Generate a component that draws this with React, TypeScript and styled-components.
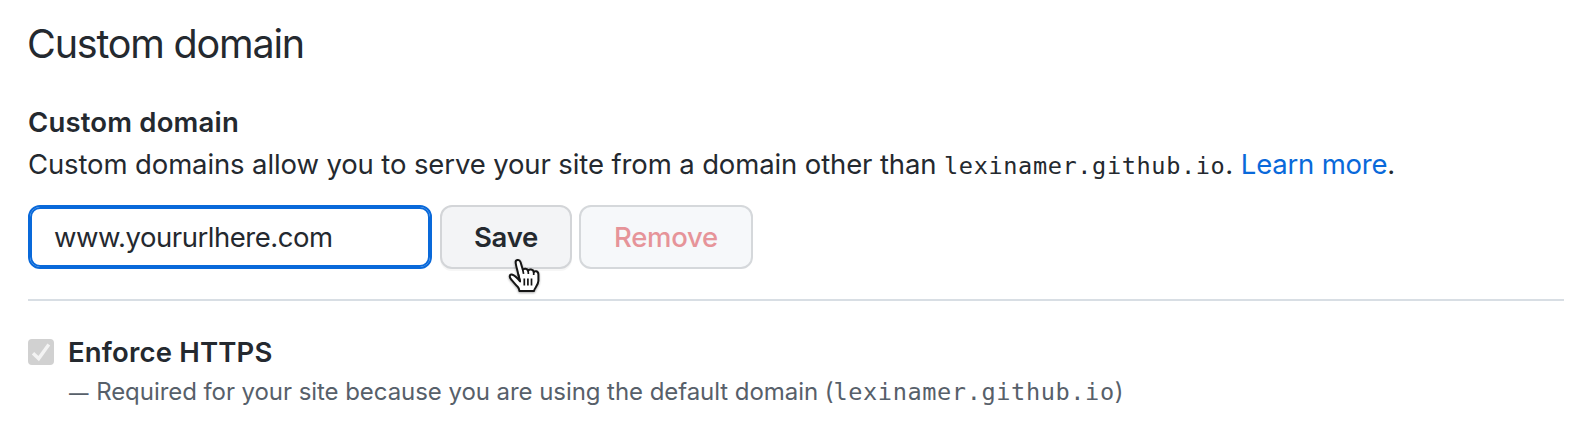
import React from "react";
import styled, { createGlobalStyle } from "styled-components";

const Global = createGlobalStyle`
  *{box-sizing:border-box}
  body{margin:0;background:#fff;color:#24292f;font-family:Inter,"Liberation Sans",sans-serif}
`;
const Page = styled.main`
  width: 1573px;
  height: 430px;
  padding: 19px 9px 0 28px;
  display: flex;
  flex-direction: column;
  align-items: flex-start;
  overflow: hidden;
`;
const Title = styled.h2`
  margin: 0 0 0 -1px;
  font-size: 39.5px;
  line-height: 50px;
  font-weight: 430;
  letter-spacing: -1.2px;
  white-space: nowrap;
`;
const Label = styled.h3<{ $top?: number }>`
  margin: ${p => p.$top ?? 0}px 0 0;
  font-size: 27.5px;
  line-height: 42px;
  font-weight: 620;
  letter-spacing: 0.18px;
  white-space: nowrap;
`;
const Text = styled.p`
  margin: 0;
  font-size: 27.5px;
  line-height: 42px;
  letter-spacing: -0.12px;
  white-space: nowrap;
`;
const Code = styled.code`
  font-family: "DejaVu Sans Mono", "Liberation Mono", monospace;
  font-size: 23.6px;
  letter-spacing: 0.6px;
`;
const Link = styled.a`
  color: #0969da;
  letter-spacing: -0.2px;
`;
const Form = styled.form`
  margin-top: 18px;
  display: flex;
  gap: 8px;
`;
const Field = styled.input`
  width: 404px;
  height: 64px;
  border: 2px solid #0969da;
  border-radius: 12px;
  box-shadow: inset 0 0 0 2px #0969da;
  padding: 0 24px;
  font: 400 27.5px Inter, sans-serif;
  letter-spacing: -0.47px;
  color: #24292f;
  outline: none;
  background: #fff;
`;
const Actions = styled.div`
  display: flex;
  gap: 7px;
`;
const Button = styled.button<{ $w: number; $danger?: boolean }>`
  position: relative;
  width: ${p => p.$w}px;
  height: 64px;
  border: 2px solid ${p => (p.$danger ? "#d5d8db" : "#d3d5d8")};
  border-radius: 12px;
  background: ${p => (p.$danger ? "#f6f8fa" : "#f3f4f6")};
  box-shadow: ${p => (p.$danger ? "none" : "0 2px 0 rgba(27,31,36,0.04)")};
  color: ${p => (p.$danger ? "#e69499" : "#24292f")};
  font: ${p => (p.$danger ? 520 : 560)} 27.5px Inter, sans-serif;
  letter-spacing: -0.25px;
  padding: 0;
`;
const Pointer = styled.svg`
  position: absolute;
  left: 66px;
  top: 51px;
  width: 34px;
  height: 38px;
  overflow: visible;
  filter: drop-shadow(0 1.5px 1px rgba(0, 0, 0, 0.35));
`;
const Rule = styled.hr`
  width: 100%;
  height: 2px;
  border: 0;
  background: #d8dee4;
  margin: 30px 0;
`;
const CheckRow = styled.div`
  display: flex;
  align-items: center;
  gap: 14px;
`;
const Check = styled.svg`
  width: 26px;
  height: 26px;
`;
const Note = styled.p`
  margin: 1px 0 0 41px;
  font-size: 24px;
  line-height: 36px;
  letter-spacing: -0.06px;
  color: #57606a;
  white-space: nowrap;
`;
const Dash = styled.span`
  font-size: 19.5px;
  font-weight: 500;
  margin-right: 1px;
`;

export default function App() {
  return (
    <>
      <Global />
      <Page>
        <Title>Custom domain</Title>
        <Label $top={32}>Custom domain</Label>
        <Text>
          Custom domains allow you to serve your site from a domain other than{" "}
          <Code>lexinamer.github.io</Code>. <Link>Learn more</Link>.
        </Text>
        <Form>
          <Field defaultValue="www.yoururlhere.com" />
          <Actions>
            <Button $w={132} type="button">
              Save
              <Pointer viewBox="0 0 34 38">
                <path
                  d="M12.1 23.5 C10.2 21 7.8 18 4.5 16.8 C1.2 15.7 1 19.2 3.2 21.5 C5.6 24.1 7.8 27 9.7 28.8 C11.2 30.4 11.4 31.2 11.4 33 H26 C26 30.6 30.4 27.4 30.4 22.8 V16.5 C30.4 12.7 26.2 12.6 25.8 14.2 C25.2 10.9 20.9 10.8 20.1 12.8 C19.2 10.3 15.9 10.1 14.8 11.8 L12.5 4 C11.3 0.7 7.1 1.6 7.7 5 C8.2 9 9.7 13 10.4 17.1 Z"
                  fill="#fff"
                  stroke="#151515"
                  strokeWidth="2"
                  strokeLinejoin="round"
                />
                <path
                  d="M10.4 16.5 L12.1 23.2 M14.7 11.5 L15.6 15.8 M20.1 12.5 L20.4 16 M25.7 13.8 V17 M16.3 20.5 V27.5 M19.9 20.5 V27.5 M23.5 20.5 V27.5"
                  fill="none"
                  stroke="#151515"
                  strokeWidth="1.7"
                />
              </Pointer>
            </Button>
            <Button $w={174} $danger type="button">Remove</Button>
          </Actions>
        </Form>
        <Rule />
        <CheckRow>
          <Check viewBox="0 0 26 26">
            <rect width="26" height="26" rx="4" fill="#d1d1d1" />
            <path d="M5 14.2 L10.7 19.6 L20.8 5.4" fill="none" stroke="#f3f3f3" strokeWidth="3.4" />
          </Check>
          <Label>Enforce HTTPS</Label>
        </CheckRow>
        <Note>
          <Dash>—</Dash> Required for your site because you are using the default domain (
          <Code>lexinamer.github.io</Code>)
        </Note>
      </Page>
    </>
  );
}
